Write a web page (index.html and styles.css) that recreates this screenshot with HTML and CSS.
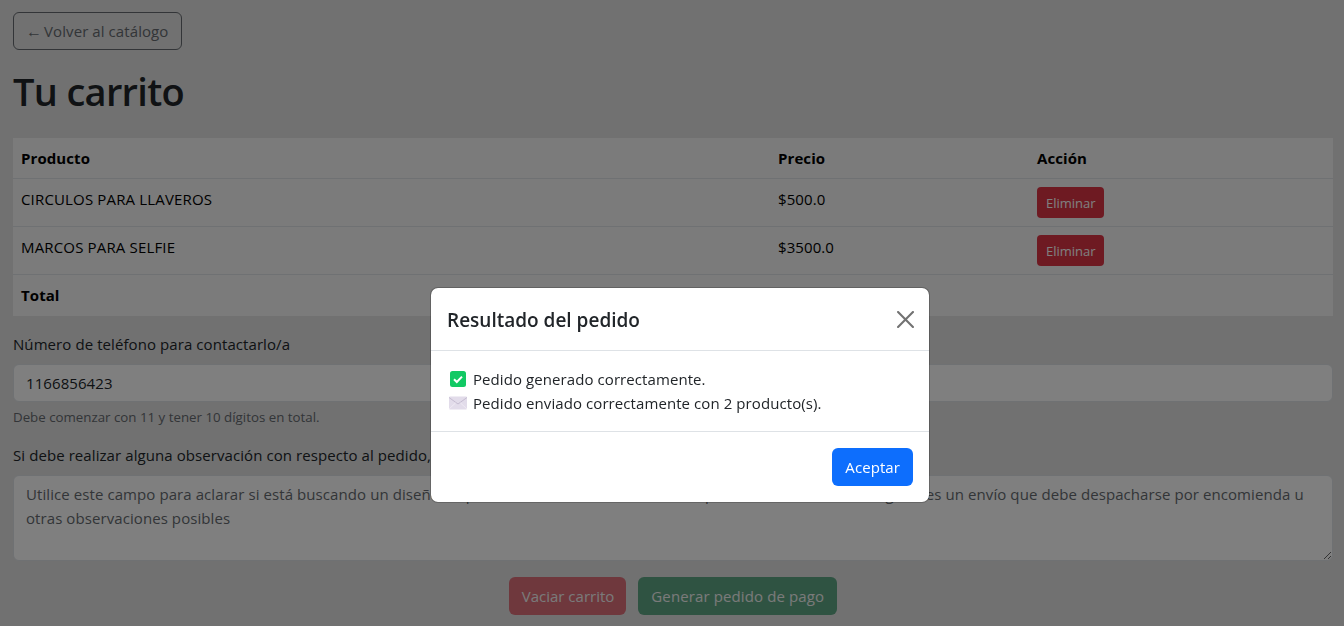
FILE: index.html
```html
<!DOCTYPE html>
<html lang="es">
<head>
<meta charset="utf-8">
<title>Tu carrito</title>
<link rel="stylesheet" href="styles.css">
</head>
<body>
<main class="page">
  <a class="btn btn-back"><span class="arrow">←</span>Volver al catálogo</a>
  <h1 class="title">Tu carrito</h1>
  <table class="cart">
    <thead>
      <tr><th class="col-product">Producto</th><th class="col-price">Precio</th><th>Acción</th></tr>
    </thead>
    <tbody>
      <tr><td class="name">CIRCULOS PARA LLAVEROS</td><td>$500.0</td><td><button class="btn-delete">Eliminar</button></td></tr>
      <tr><td class="name">MARCOS PARA SELFIE</td><td>$3500.0</td><td><button class="btn-delete">Eliminar</button></td></tr>
      <tr class="total"><td>Total</td><td>$4000.0</td><td></td></tr>
    </tbody>
  </table>
  <label class="label" for="phone">Número de teléfono para contactarlo/a</label>
  <input class="field" id="phone" value="1166856423">
  <p class="hint">Debe comenzar con 11 y tener 10 dígitos en total.</p>
  <label class="label label-obs" for="obs">Si debe realizar alguna observación con respecto al pedido, por favor indíquela aquí</label>
  <textarea class="field area" id="obs" placeholder="Utilice este campo para aclarar si está buscando un diseño en particular, una medida o color no publicado en dicho catálogo, si es un envío que debe despacharse por encomienda u otras observaciones posibles"></textarea>
  <div class="actions">
    <button class="btn btn-clear">Vaciar carrito</button>
    <button class="btn btn-order">Generar pedido de pago</button>
  </div>
</main>
<div class="backdrop"></div>
<section class="modal">
  <header class="modal-head">
    <h2 class="modal-title">Resultado del pedido</h2>
    <svg class="close" viewBox="0 0 16 16" aria-label="Cerrar"><path d="M.293.293a1 1 0 0 1 1.414 0L8 6.586 14.293.293a1 1 0 1 1 1.414 1.414L9.414 8l6.293 6.293a1 1 0 0 1-1.414 1.414L8 9.414l-6.293 6.293a1 1 0 0 1-1.414-1.414L6.586 8 .293 1.707a1 1 0 0 1 0-1.414"/></svg>
  </header>
  <div class="modal-body">
    <p class="msg">
      <svg class="ico" viewBox="0 0 18 18"><rect x="1" y="1" width="16" height="16" rx="2.5" fill="#12c964"/><path d="M5 9.2l2.8 2.8L13 6.6" fill="none" stroke="#fff" stroke-width="2"/></svg>
      Pedido generado correctamente.
    </p>
    <p class="msg">
      <svg class="ico" viewBox="0 0 18 18"><rect x="0" y="2.5" width="18" height="13" rx="1" fill="#e2dcea"/><path d="M0 3.5l9 6.5 9-6.5" fill="none" stroke="#c4bcd0" stroke-width="1"/><path d="M0 15l6.5-6M18 15l-6.5-6" fill="none" stroke="#efeaf3" stroke-width="1"/></svg>
      Pedido enviado correctamente con 2 producto(s).
    </p>
  </div>
  <footer class="modal-foot"><button class="btn btn-accept">Aceptar</button></footer>
</section>
</body>
</html>
```
FILE: styles.css
```css
* { box-sizing: border-box; }
html, body { margin: 0; height: 100%; overflow: hidden; }
body {
  background: #e2e2e2;
  color: #212529;
  font-family: "Open Sans", "Noto Sans", sans-serif;
  font-size: 15px;
  line-height: 24px;
  letter-spacing: .08px;
}
.page { padding: 12px 11px 0 13px; }
.btn {
  display: inline-block;
  height: 38px;
  padding: 6px 12px;
  border: 1px solid transparent;
  border-radius: 6px;
  font: inherit;
  letter-spacing: inherit;
  line-height: 24px;
}
.btn-back { padding-right: 13px; border-color: #666b70; color: #666b70; }
.arrow { margin-right: 2px; font-family: "Liberation Sans", sans-serif; font-size: 16px; }
.title {
  margin: 17px 0 23px;
  font-size: 38px;
  line-height: 48px;
  font-weight: 600;
  letter-spacing: -.7px;
}
.cart {
  width: 100%;
  border-collapse: collapse;
  background: #f6f6f6;
  color: #000;
  table-layout: fixed;
}
.cart th, .cart td {
  padding: 8px;
  text-align: left;
  vertical-align: top;
  border-bottom: 1px solid #dee2e6;
}
.cart th { font-weight: 700; height: 40px; }
.cart td { height: 48px; }
.cart .name { letter-spacing: .16px; }
.cart .total td { height: 41px; font-weight: 700; border-bottom: 0; }
.col-product { width: 757px; }
.col-price { width: 259px; }
.btn-delete {
  display: block;
  height: 31px;
  padding: 0 8px 0 9px;
  border: 0;
  border-radius: 4px;
  background: #dc3545;
  color: #fff;
  font: inherit;
  font-size: 13px;
}
.label { display: block; margin-top: 16px; height: 24px; color: #212529; }
.field {
  display: block;
  width: 100%;
  height: 38px;
  margin-top: 8px;
  padding: 6px 12px;
  border: 1px solid #dee2e6;
  border-radius: 6px;
  background: #fff;
  color: #212529;
  font: inherit;
  letter-spacing: inherit;
}
.hint { margin: 5px 0 0; font-size: 13.3px; line-height: 21px; letter-spacing: 0; color: #666b70; }
.label-obs { margin-top: 15px; }
.area { height: 86px; margin-top: 8px; resize: vertical; }
.area::placeholder { color: #666b70; opacity: 1; }
.actions { display: flex; justify-content: center; gap: 12px; margin-top: 16px; }
.btn-clear { padding-right: 11px; background: #dc3545; color: #fff; opacity: .65; letter-spacing: 0; }
.btn-order { background: #198754; color: #fff; opacity: .65; letter-spacing: .12px; }
.backdrop { position: fixed; inset: 0; background: rgba(0, 0, 0, .5); }
.modal {
  position: fixed;
  left: 430px;
  top: 287px;
  width: 500px;
  border: 1px solid rgba(0, 0, 0, .2);
  border-radius: 8px;
  background: #fff;
  background-clip: padding-box;
  color: #212529;
}
.modal-head {
  display: flex;
  align-items: center;
  justify-content: space-between;
  height: 63px;
  padding: 1px 15px 0 16px;
  border-bottom: 1px solid #dee2e6;
}
.modal-title { margin: 0; font-size: 19px; line-height: 30px; font-weight: 600; letter-spacing: 0; }
.close { width: 17px; height: 17px; margin-right: 0; fill: #000; opacity: .55; }
.modal-body { padding: 16px; }
.msg { display: flex; align-items: center; gap: 6px; margin: 0; height: 24px; padding-left: 2px; }
.ico { width: 18px; height: 18px; flex: none; }
.modal-foot {
  display: flex;
  justify-content: flex-end;
  height: 71px;
  padding: 16px;
  border-top: 1px solid #dee2e6;
}
.btn-accept { background: #0d6efd; color: #fff; }
```
